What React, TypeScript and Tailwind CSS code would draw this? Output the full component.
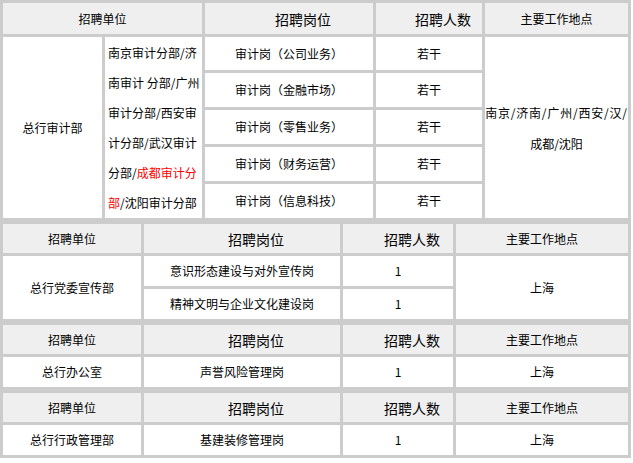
const font = "font-['Noto_Sans_CJK_SC','Noto_Sans',sans-serif]"

function Cell({ children, head = false, wide = false, className = "" }: { children?: React.ReactNode; head?: boolean; wide?: boolean; className?: string }) {
  return (
    <div
      className={`flex items-center justify-center text-center text-black ${head ? "bg-[#efefef]" : "bg-white"} ${wide ? "text-[14px] pl-[28px]" : "text-[12px]"} ${className}`}
    >
      {children}
    </div>
  )
}

function Head4() {
  return (
    <>
      <Cell head>招聘单位</Cell>
      <Cell head wide>招聘岗位</Cell>
      <Cell head wide>招聘人数</Cell>
      <Cell head>主要工作地点</Cell>
    </>
  )
}

export default function App() {
  return (
    <div className={`w-[633px] h-[463px] bg-white ${font} leading-none`}>
      {/* 总行审计部 */}
      <div className="w-[631px] bg-[#cccccc] p-[3px] grid gap-[3px] grid-cols-[99px_97px_168px_106px_143px] grid-rows-[31px_33px_34px_34px_34px_34px]">
        <Cell head className="col-span-2">招聘单位</Cell>
        <Cell head wide>招聘岗位</Cell>
        <Cell head wide>招聘人数</Cell>
        <Cell head>主要工作地点</Cell>

        <Cell className="row-span-5">总行审计部</Cell>
        <div className="row-span-5 bg-white flex items-center pl-[3px] text-[12px] leading-[30px] text-black whitespace-nowrap">
          <div>
            南京审计分部/济<br />
            南审计 分部/广州<br />
            审计分部/西安审<br />
            计分部/武汉审计<br />
            分部/<span className="text-[#ff0000]">成都审计分</span><br />
            <span className="text-[#ff0000]">部</span>/沈阳审计分部
          </div>
        </div>
        <Cell>审计岗（公司业务）</Cell>
        <Cell>若干</Cell>
        <div className="row-span-5 bg-white flex items-center justify-center text-center text-[12px] leading-[31px] text-black whitespace-nowrap">
          <div>
            <span className="tracking-[0.8px]">南京/济南/广州/西安/汉/</span><br />
            成都/沈阳
          </div>
        </div>
        <Cell>审计岗（金融市场）</Cell>
        <Cell>若干</Cell>
        <Cell>审计岗（零售业务）</Cell>
        <Cell>若干</Cell>
        <Cell>审计岗（财务运营）</Cell>
        <Cell>若干</Cell>
        <Cell>审计岗（信息科技）</Cell>
        <Cell>若干</Cell>
      </div>

      {/* 总行党委宣传部 */}
      <div className="w-[631px] bg-[#cccccc] p-[3px] grid gap-[3px] grid-cols-[138px_196px_110px_172px] grid-rows-[29px_30px_30px]">
        <Head4 />
        <Cell className="row-span-2">总行党委宣传部</Cell>
        <Cell>意识形态建设与对外宣传岗</Cell>
        <Cell>1</Cell>
        <Cell className="row-span-2">上海</Cell>
        <Cell>精神文明与企业文化建设岗</Cell>
        <Cell>1</Cell>
      </div>

      {/* 总行办公室 */}
      <div className="w-[631px] bg-[#cccccc] p-[3px] grid gap-[3px] grid-cols-[138px_196px_110px_172px] grid-rows-[29px_30px]">
        <Head4 />
        <Cell>总行办公室</Cell>
        <Cell>声誉风险管理岗</Cell>
        <Cell>1</Cell>
        <Cell>上海</Cell>
      </div>

      {/* 总行行政管理部 */}
      <div className="w-[631px] bg-[#cccccc] p-[3px] grid gap-[3px] grid-cols-[138px_196px_110px_172px] grid-rows-[29px_30px]">
        <Head4 />
        <Cell>总行行政管理部</Cell>
        <Cell>基建装修管理岗</Cell>
        <Cell>1</Cell>
        <Cell>上海</Cell>
      </div>
    </div>
  )
}
